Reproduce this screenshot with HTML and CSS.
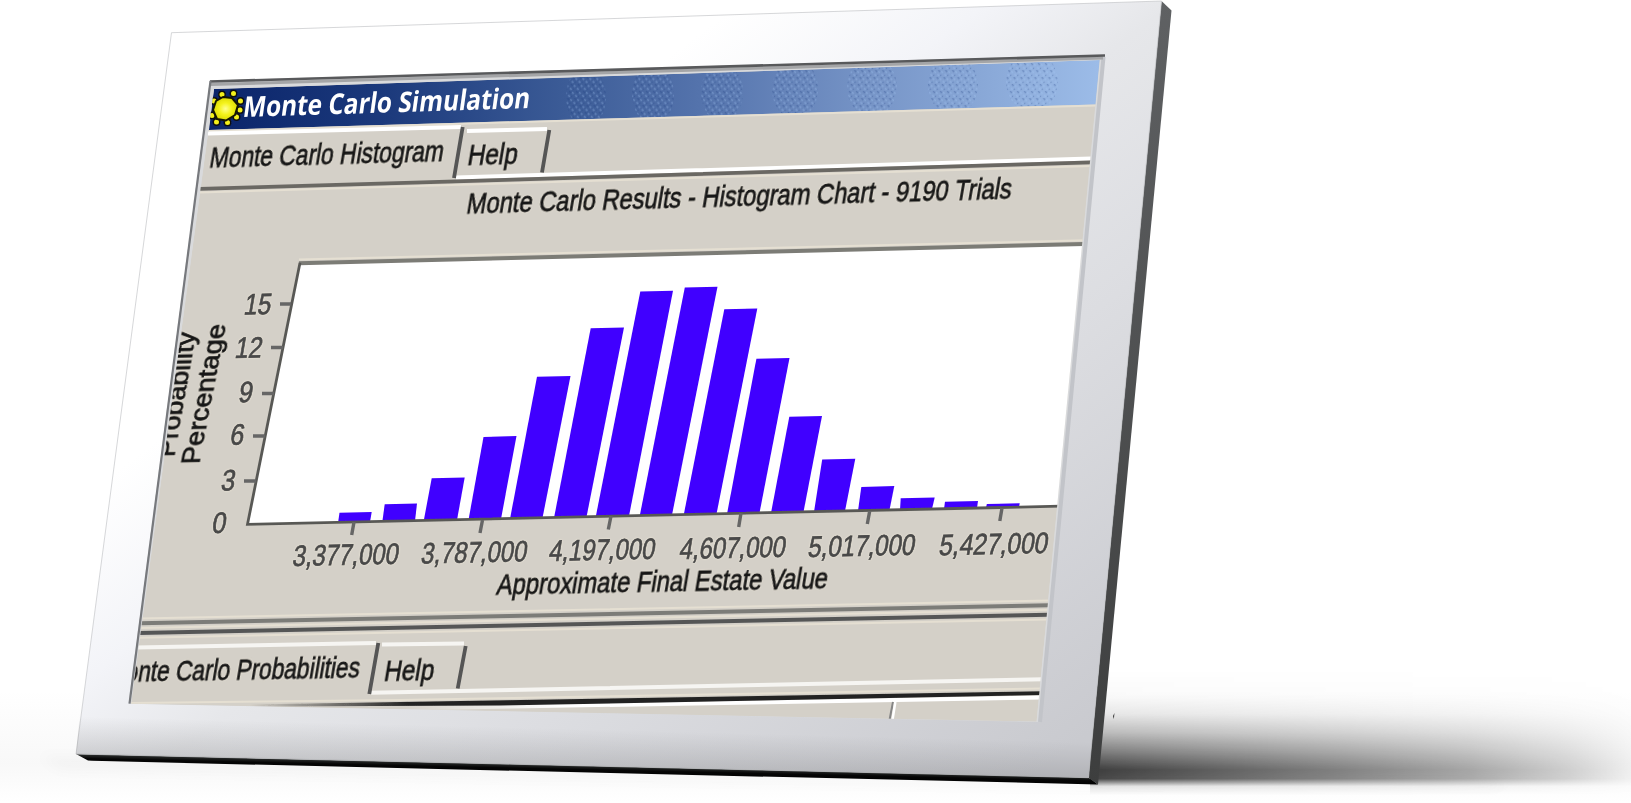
FILE: index.html
```html
<!DOCTYPE html>
<html lang="en">
<head>
<meta charset="utf-8">
<title>Monte Carlo Simulation</title>
<link rel="stylesheet" href="styles.css">
</head>
<body>
<svg class="scene" viewBox="0 0 1631 803" role="img" aria-label="Monte Carlo Simulation">
  <defs>
    <linearGradient id="frameFill" gradientUnits="userSpaceOnUse" x1="0" y1="0" x2="744" y2="992">
      <stop offset=".36" stop-color="#fff"/><stop offset=".48" stop-color="#f3f4f8"/><stop offset=".57" stop-color="#e6e7ea"/><stop offset=".73" stop-color="#dcdde1"/><stop offset="1" stop-color="#c9cacf"/>
    </linearGradient>
    <linearGradient id="frameFoot" gradientUnits="userSpaceOnUse" x1="582" y1="729" x2="581" y2="768">
      <stop offset="0" stop-color="#333" stop-opacity="0"/><stop offset="1" stop-color="#333" stop-opacity=".17"/>
    </linearGradient>
    <linearGradient id="side" x1="0" y1="0" x2="0" y2="1"><stop offset="0" stop-color="#5f6163"/><stop offset="1" stop-color="#3d3e3e"/></linearGradient>
    <linearGradient id="under" gradientUnits="userSpaceOnUse" x1="582" y1="765" x2="581.8" y2="774">
      <stop offset="0" stop-color="#303332"/><stop offset=".5" stop-color="#050505"/><stop offset="1" stop-color="#000"/>
    </linearGradient>
    <linearGradient id="titleFill" gradientUnits="userSpaceOnUse" x1="210" y1="0" x2="1100" y2="0">
      <stop offset="0" stop-color="#0a246a"/><stop offset=".2" stop-color="#1c3a7c"/><stop offset=".4" stop-color="#3c5c97"/><stop offset=".55" stop-color="#5473ac"/><stop offset=".75" stop-color="#7896c8"/><stop offset="1" stop-color="#9cbce8"/>
    </linearGradient>
    <linearGradient id="shadeV" x1="0" y1="0" x2="0" y2="1">
      <stop offset="0" stop-color="#000" stop-opacity="0"/><stop offset=".2" stop-color="#000" stop-opacity=".02"/><stop offset=".35" stop-color="#000" stop-opacity=".09"/><stop offset=".5" stop-color="#000" stop-opacity=".27"/><stop offset=".65" stop-color="#000" stop-opacity=".52"/><stop offset=".8" stop-color="#000" stop-opacity=".8"/><stop offset=".87" stop-color="#000" stop-opacity=".76"/><stop offset=".93" stop-color="#000" stop-opacity=".1"/><stop offset="1" stop-color="#000" stop-opacity="0"/>
    </linearGradient>
    <linearGradient id="shadeH" x1="0" y1="0" x2="1" y2="0">
      <stop offset="0" stop-color="#fff" stop-opacity=".95"/><stop offset=".2" stop-color="#fff" stop-opacity=".8"/><stop offset=".47" stop-color="#fff" stop-opacity=".6"/><stop offset=".7" stop-color="#fff" stop-opacity=".42"/><stop offset=".88" stop-color="#fff" stop-opacity=".22"/><stop offset="1" stop-color="#fff" stop-opacity=".05"/>
    </linearGradient>
    <mask id="shadeMask" maskUnits="userSpaceOnUse" x="1090" y="660" width="541" height="143"><rect x="1090" y="660" width="541" height="143" fill="url(#shadeH)"/></mask>
    <linearGradient id="floor" x1="0" y1="0" x2="0" y2="1"><stop offset="0" stop-color="#777" stop-opacity="0"/><stop offset=".65" stop-color="#777" stop-opacity=".05"/><stop offset="1" stop-color="#777" stop-opacity="0"/></linearGradient>
    <linearGradient id="rule" x1="0" y1="0" x2="1" y2="0"><stop offset="0" stop-color="#222" stop-opacity="0"/><stop offset=".2" stop-color="#222"/><stop offset="1" stop-color="#222"/></linearGradient>
    <linearGradient id="ruleLight" gradientUnits="userSpaceOnUse" x1="400" y1="0" x2="560" y2="0"><stop offset="0" stop-color="#fff" stop-opacity="0"/><stop offset="1" stop-color="#fff"/></linearGradient>
    <pattern id="dither" width="7" height="7" patternUnits="userSpaceOnUse" patternTransform="skewX(-14)">
      <path d="M0 1l2 2M4 4l2 2" stroke="#a9cbf8" stroke-width="1.4"/><path d="M4 0l2 2M0 5l1 1" stroke="#1d3d80" stroke-width="1.2"/>
    </pattern>
    <radialGradient id="sun"><stop offset="0" stop-color="#ffff90"/><stop offset=".5" stop-color="#f5f31c"/><stop offset="1" stop-color="#dcda00"/></radialGradient>
    <clipPath id="screen"><path d="M214 89L1099.700 60L1036.600 721.500L131 703.800Z"/></clipPath>
    <clipPath id="titleClip"><path d="M214 89L1100 60L1095.800 104.500L209 130Z"/></clipPath>
    <filter id="soft" x="-2%" y="-2%" width="104%" height="104%"><feGaussianBlur stdDeviation=".65"/></filter>
  </defs>

  <!-- cast shadow -->
  <rect x="0" y="690" width="1631" height="113" fill="url(#floor)"/>
  <path class="ground" d="M40 756L1110 784L1500 782V788H1100L60 770Z"/>
  <rect x="1090" y="670" width="541" height="125" fill="url(#shadeV)" mask="url(#shadeMask)"/>
  <path class="speck" d="M1114.500 713L1113 716L1113.800 719Z"/>

  <!-- frame -->
  <path fill="url(#under)" d="M76 754L1088.500 777.500L1098 784.500L92 760.800L88 760.500Z"/>
  <path fill="url(#side)" d="M1161.500 1L1171.500 10.500L1098 784.500L1088.500 777.500Z"/>
  <path class="frame-face" fill="url(#frameFill)" d="M171.500 32.700L1161.500 1L1088.500 777.700L76 754Z"/>
  <path fill="url(#frameFoot)" d="M79.500 717L1094.500 741L1088.500 777.700L76 754Z"/>
  <path class="bevel" d="M210 80.500L1105 54.500L1041 722L128.500 703.700Z"/>
  <path class="bevel-right" d="M1103.500 57L1040 722"/>
  <path class="bevel-top-soft" d="M211 84.500L1103 58"/>
  <path class="bevel-top" d="M210 81.500L1105 55.500"/>
  <path class="bevel-left" d="M210.500 81L129.500 703.700"/>

  <g clip-path="url(#screen)">
    <path class="face" d="M214 89L1100 60L1036.600 722L131 704Z"/>
    <path fill="url(#titleFill)" d="M214 89L1100 60L1095.800 104.500L209 130Z"/>
    <g class="dither" fill="url(#dither)" clip-path="url(#titleClip)">
      <ellipse cx="586" cy="97" rx="20" ry="30"/><ellipse cx="653" cy="94" rx="21" ry="30"/><ellipse cx="722" cy="92" rx="21" ry="30"/><ellipse cx="795" cy="89" rx="23" ry="30"/><ellipse cx="872" cy="87" rx="25" ry="30"/><ellipse cx="953" cy="85" rx="25" ry="30"/><ellipse cx="1032" cy="82" rx="26" ry="30"/>
    </g>
    <g filter="url(#soft)">
      <path class="cream" d="M209 131L1096 105.500"/>

      <!-- application icon -->
      <g class="rays"><circle cx="222" cy="94.500" r="3.200"/><circle cx="233.500" cy="93.500" r="3.200"/><circle cx="240.500" cy="101" r="3.200"/><circle cx="240" cy="110" r="3.200"/><circle cx="236.500" cy="117" r="3.200"/><circle cx="227.500" cy="122.500" r="3.200"/><circle cx="216.500" cy="122" r="3.200"/><circle cx="212" cy="115.500" r="3.200"/><circle cx="214" cy="101" r="3.200"/></g>
      <path class="sun" fill="url(#sun)" d="M223 97L232 98L238 105L235 115L226 120.500L217 119L213 110L216 101Z"/>
      <text class="caption" transform="matrix(1 -.031 -.14 1 242 117)" textLength="287" lengthAdjust="spacingAndGlyphs">Monte Carlo Simulation</text>

      <!-- upper tabs -->
      <path class="hi" d="M208 133.500L461 127M467 131L547 129M456 177.500L1091 158.500"/>
      <path class="edge" d="M462.700 127L454 178M549.300 130L542 172.500"/>
      <path class="rule-dark" d="M200 188.800L456 181.300L1091 162.300"/>
      <path class="cream" d="M200 192.500L1091 166"/>
      <text class="label" transform="matrix(1 -.028 -.17 1 208.500 167.500)" textLength="234" lengthAdjust="spacingAndGlyphs">Monte Carlo Histogram</text>
      <text class="label" transform="matrix(1 -.026 -.17 1 466.500 165)" textLength="50" lengthAdjust="spacingAndGlyphs">Help</text>
      <text class="label" transform="matrix(1 -.0275 -.17 1 465.500 213.500)" textLength="545" lengthAdjust="spacingAndGlyphs">Monte Carlo Results - Histogram Chart - 9190 Trials</text>

      <!-- plot area -->
      <path class="plot" d="M300 262.700L1085 244L1060 506L247.500 524.300Z"/>
      <path class="cream" d="M299 259.500L1084 240.300"/>
      <path class="plot-top" d="M299 263.200L1084 244"/>
      <g class="bars">
        <path d="M339.500 512.700L371.700 512L370 522L338 523Z"/>
        <path d="M384.700 504.300L417 503.500L415 521L382.300 522Z"/>
        <path d="M431.700 478.300L464.700 477.500L457 520L423.700 521Z"/>
        <path d="M483.500 437L516.500 436L501 519L468.500 520Z"/>
        <path d="M537 376.700L570.500 376L542.500 518L510 519Z"/>
        <path d="M590.700 328.300L624 327.500L586.500 517L554 518Z"/>
        <path d="M640.300 291.500L673 290.800L629 516L595.700 517Z"/>
        <path d="M684.800 287.500L717.500 286.800L672 515L639.700 516Z"/>
        <path d="M724.300 309.200L757.300 308.500L716.500 514L683.700 515Z"/>
        <path d="M756.400 358.700L789.500 358L759.500 513L727 514Z"/>
        <path d="M789.300 416.800L822 416L803.500 512L771 513Z"/>
        <path d="M822.200 459.500L855.300 458.700L845 511L814 512Z"/>
        <path d="M861.300 487L894.300 486L889.500 510L858 511Z"/>
        <path d="M900.700 498.300L934.700 497.500L932 509L900 510Z"/>
        <path d="M945 501.800L978 501L977 508L944 509Z"/>
        <path d="M986.800 504L1019.700 503.200L1019 507L986 508Z"/>
      </g>
      <path class="axis" d="M300 262.700L247.500 524.300L1060 506.200"/>
      <path class="tick" d="M280 304H291M271 347.500H283M262 393.500H274M253 436H265M244 481H256M354 522L351.700 535M482.500 520L480 533M611 516L608.300 529.500M741 513L738.700 527M869.700 511L867.300 524M1002 508L999.800 521"/>

      <g class="scale">
        <text transform="matrix(1 -.02 -.17 1 243 314.500)" textLength="27" lengthAdjust="spacingAndGlyphs">15</text>
        <text transform="matrix(1 -.02 -.17 1 234 358)" textLength="27" lengthAdjust="spacingAndGlyphs">12</text>
        <text transform="matrix(1 -.02 -.17 1 237.500 402.300)" textLength="14" lengthAdjust="spacingAndGlyphs">9</text>
        <text transform="matrix(1 -.02 -.17 1 229 444.700)" textLength="14" lengthAdjust="spacingAndGlyphs">6</text>
        <text transform="matrix(1 -.02 -.17 1 220 490.500)" textLength="14" lengthAdjust="spacingAndGlyphs">3</text>
        <text transform="matrix(1 -.02 -.17 1 211 533)" textLength="14" lengthAdjust="spacingAndGlyphs">0</text>
        <text transform="matrix(1 -.022 -.17 1 291.500 566)" textLength="106" lengthAdjust="spacingAndGlyphs">3,377,000</text>
        <text transform="matrix(1 -.022 -.17 1 420 563.500)" textLength="106" lengthAdjust="spacingAndGlyphs">3,787,000</text>
        <text transform="matrix(1 -.022 -.17 1 548 561)" textLength="106" lengthAdjust="spacingAndGlyphs">4,197,000</text>
        <text transform="matrix(1 -.022 -.17 1 678.500 559)" textLength="106" lengthAdjust="spacingAndGlyphs">4,607,000</text>
        <text transform="matrix(1 -.022 -.17 1 807 557)" textLength="107" lengthAdjust="spacingAndGlyphs">5,017,000</text>
        <text transform="matrix(1 -.022 -.17 1 938 555.300)" textLength="109" lengthAdjust="spacingAndGlyphs">5,427,000</text>
      </g>
      <text class="label" transform="matrix(1 -.019 -.17 1 495.500 595)" textLength="331" lengthAdjust="spacingAndGlyphs">Approximate Final Estate Value</text>
      <text class="label side-label" transform="matrix(.175 -.985 1 -.02 174 457)" textLength="127" lengthAdjust="spacingAndGlyphs">Probability</text>
      <text class="label side-label" transform="matrix(.19 -.98 1 -.02 199 464)" textLength="143" lengthAdjust="spacingAndGlyphs">Percentage</text>

      <!-- splitter -->
      <path class="cream" d="M140 618.500L1050 600.500M140 628L1049 609.800M139 637.800L1047 619.500"/>
      <path class="split-a" d="M140 623.300L1049 605.200"/>
      <path class="split-b" d="M139 633L1048 614.800"/>

      <!-- lower tabs -->
      <path class="hi low" d="M136 647.500L376 643M382 644.500L464 643.500M371 692.800L1043 679.300"/>
      <path class="edge" d="M378.300 643L369.300 694M465.700 646L457.700 688.500"/>
      <path class="cream" d="M130 703L400 700L1041 688.500"/>
      <path class="rule-light" d="M400 708.500L1040 697.500"/>
      <path fill="url(#rule)" d="M250 704.500L1042 691.300V695L500 705.600L250 706.500Z"/>
      <path class="edge-thin" d="M893 702L889.500 720"/><path class="hi-thin" d="M895.300 702L892.500 720"/>
      <text class="label" transform="matrix(1 -.018 -.17 1 105.500 682)" textLength="253" lengthAdjust="spacingAndGlyphs">Monte Carlo Probabilities</text>
      <text class="label" transform="matrix(1 -.018 -.17 1 383 680.800)" textLength="50" lengthAdjust="spacingAndGlyphs">Help</text>
    </g>
  </g>
</svg>
</body>
</html>
```
FILE: styles.css
```css
body { margin: 0; background: #fff; overflow: hidden; }
.scene { display: block; width: 1631px; height: 803px; }
.ground { fill: #777; opacity: .04; filter: blur(6px); }
.speck { fill: #333; }
.frame-face { stroke: #c4c5c8; stroke-width: .7; }
.bevel { fill: #d9dadc; }
.bevel-right { stroke: #c2c4c9; stroke-width: 4; fill: none; }
.bevel-top { stroke: #58595b; stroke-width: 2.6; }
.bevel-top-soft { stroke: #a4a5a7; stroke-width: 3; }
.bevel-left { stroke: #77797d; stroke-width: 2.2; }
.face { fill: #d4d0c8; }
.dither { opacity: .3; }
.cream { fill: none; stroke: #e5dfd2; stroke-width: 2; }
.rays circle { fill: #f3f01a; stroke: #111; stroke-width: 1.4; }
.sun { stroke: #171700; stroke-width: 2; stroke-linejoin: round; }
.caption { font: bold 28.5px "Open Sans", "Noto Sans", sans-serif; fill: #fff; }
.label, .scale {
  font-family: "Liberation Sans", Arial, sans-serif;
  font-size: 29.5px;
  fill: #161616;
  stroke: #161616;
  stroke-width: .75px;
  filter: drop-shadow(0 0 1px #f3ecdc);
}
.scale { fill: #484848; stroke: #484848; }
.side-label { font-size: 25px; }
.hi { fill: none; stroke: #fff; stroke-width: 4; }
.hi.low { stroke: #f6f5f2; }
.rule-light { fill: none; stroke: url(#ruleLight); stroke-width: 4; }
.edge { fill: none; stroke: #555; stroke-width: 3.8; }
.edge-thin { stroke: #858585; stroke-width: 2; }
.hi-thin { stroke: #fff; stroke-width: 2.5; }
.rule-dark { fill: none; stroke: #6b6864; stroke-width: 3.8; }
.plot { fill: #fff; }
.plot-top { stroke: #7c7b76; stroke-width: 4; }
.bars { fill: #4000ff; }
.axis { fill: none; stroke: #595955; stroke-width: 2.8; }
.tick { fill: none; stroke: #666; stroke-width: 3.4; }
.split-a { stroke: #7c7b78; stroke-width: 4; }
.split-b { stroke: #555657; stroke-width: 4; }
```
